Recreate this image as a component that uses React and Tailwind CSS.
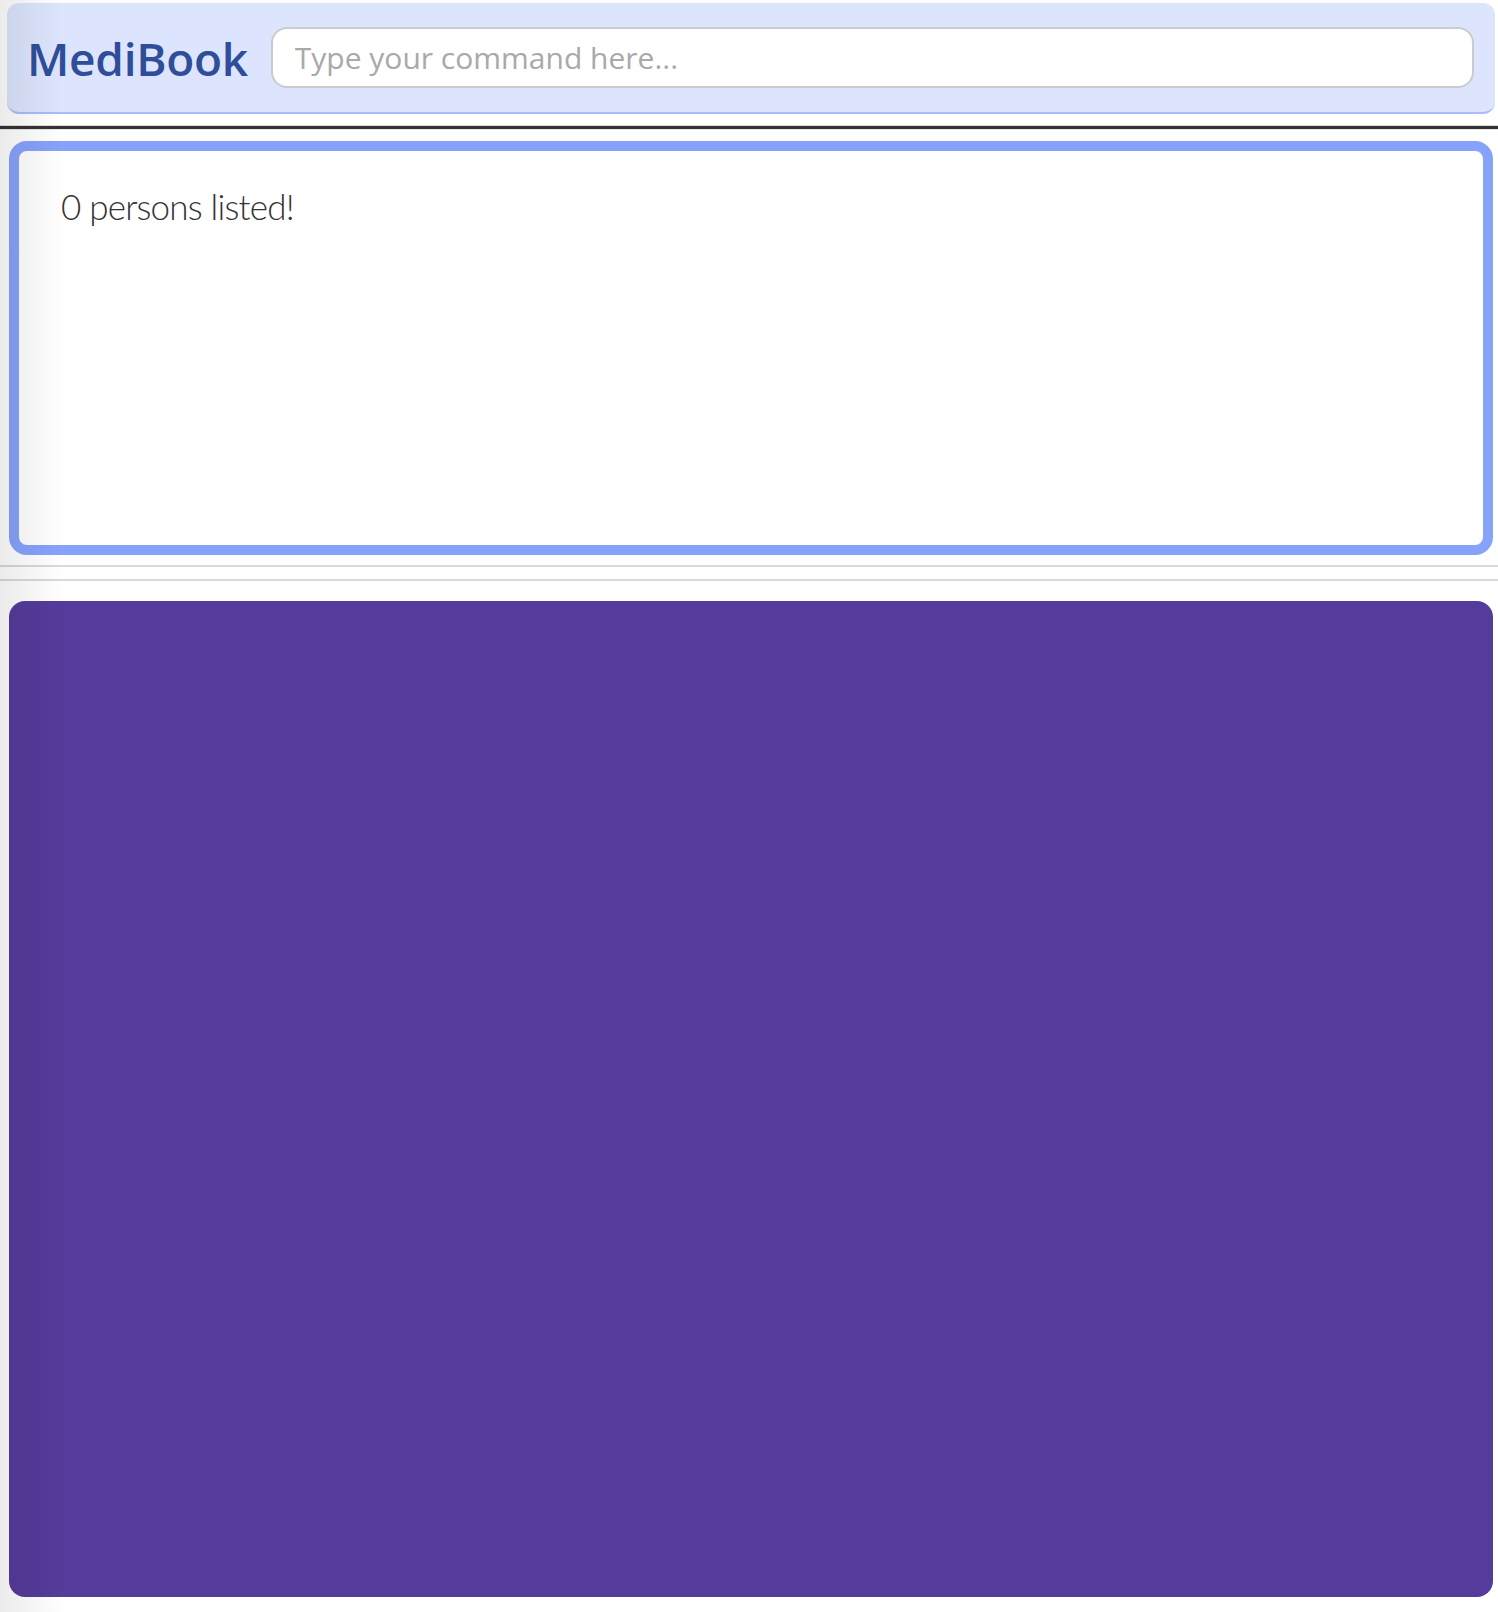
export default function App() {
  return (
    <div className="relative min-h-[1612px] bg-white overflow-hidden" style={{ fontFamily: '"Open Sans", "Noto Sans", sans-serif' }}>
      {/* left edge shade */}
      <div className="pointer-events-none absolute inset-y-0 left-0 w-[64px] bg-gradient-to-r from-[rgba(0,0,0,0.08)] to-transparent" />

      {/* Header */}
      <div className="ml-[7px] mr-[3px] mt-[3px] h-[111px] rounded-[12px] bg-[#dce5fd] border-b-2 border-[#a9bcf9] flex items-center pl-[20px] pr-[21px] gap-[23px]">
        <span className="text-[46px] font-semibold text-[#2f4d99] leading-none tracking-[-0.3px]">MediBook</span>
        <input
          className="flex-1 h-[61px] rounded-[16px] border-2 border-[#cbcbcb] bg-white pl-[22px] text-[30px] text-[#333] placeholder:text-[#a9a9a9] outline-none"
          placeholder="Type your command here..."
        />
      </div>

      {/* separator */}
      <div className="mt-[11px] h-px bg-[#dcdcdc]" />
      <div className="h-[3px] bg-[#333333]" />
      <div className="h-px bg-[#e4e4e4]" />

      {/* Result display */}
      <div className="ml-[9px] mr-[5px] mt-[11px] h-[414px] rounded-[18px] border-[10px] border-[#87a2fb] bg-white pl-[42px] pt-[34px]">
        <p className="text-[35px] font-light text-[#333] leading-[1.2] tracking-[-0.8px]" style={{ fontFamily: 'Lato, "Open Sans", sans-serif' }}>0 persons listed!</p>
      </div>

      {/* split lines */}
      <div className="mt-[10px] h-[2px] bg-[#d9d9d9]" />
      <div className="mt-[12px] h-[2px] bg-[#d9d9d9]" />

      {/* Person list */}
      <div className="ml-[9px] mr-[5px] mt-[20px] h-[996px] rounded-[16px] bg-[#553b9b]" />
    </div>
  )
}
